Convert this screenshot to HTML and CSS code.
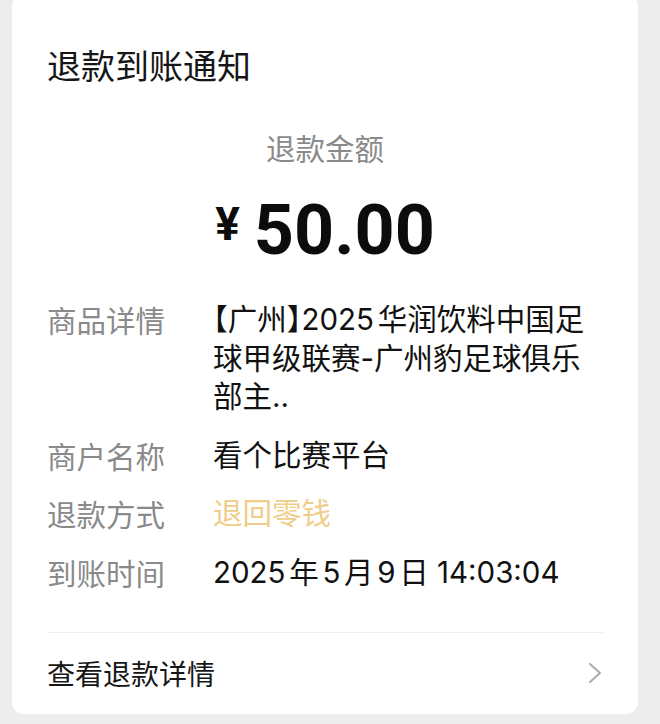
FILE: index.html
```html
<!DOCTYPE html>
<html lang="zh-CN">
<head>
<meta charset="utf-8">
<title>退款到账通知</title>
<link rel="stylesheet" href="styles.css">
</head>
<body>
<div class="card">
  <div class="title">退款到账通知</div>
  <div class="amount-label">退款金额</div>
  <div class="amount"><span class="yen">¥</span>50.00</div>
  <div class="rows">
    <div class="label">商品详情</div>
    <div class="value">【广州】2025华润饮料中国足球甲级联赛-广州豹足球俱乐<span class="tight">部主..</span></div>
    <div class="label">商户名称</div>
    <div class="value">看个比赛平台</div>
    <div class="label">退款方式</div>
    <div class="value gold">退回零钱</div>
    <div class="label">到账时间</div>
    <div class="value">2025年5月9日 14:03:04</div>
  </div>
  <div class="footer">
    <span class="footer-text">查看退款详情</span>
    <svg class="chev" width="14" height="22" viewBox="0 0 14 22"><polyline points="2,2 12,11 2,20" fill="none" stroke="#ababab" stroke-width="2" stroke-linecap="round" stroke-linejoin="round"/></svg>
  </div>
</div>
</body>
</html>
```

FILE: styles.css
```css
html, body {
  margin: 0;
  padding: 0;
  background: #ededed;
}
body {
  font-family: "Noto Sans CJK SC", "Noto Sans", sans-serif;
  color: #111;
  height: 724px;
  overflow: hidden;
}
.card {
  background: #fff;
  margin: -6px 22px 0 12px;
  border-radius: 12px;
  padding: 51px 35px 21px 35px;
}
.title {
  font-size: 34px;
  line-height: 40px;
  color: #161616;
}
.amount-label {
  margin-top: 42px;
  text-align: center;
  font-size: 29.5px;
  line-height: 40px;
  color: #8a8a8a;
}
.amount {
  margin-top: 17px;
  text-align: center;
  font-family: Roboto, "Liberation Sans", sans-serif;
  font-weight: 700;
  font-size: 70px;
  line-height: 80px;
  color: #0c0c0c;
}
.yen {
  font-size: 46px;
  vertical-align: 14px;
  margin-right: 14px;
}
.rows {
  margin-top: 30px;
  display: grid;
  grid-template-columns: 166px 1fr;
  row-gap: 20px;
  font-size: 29.5px;
  line-height: 38.5px;
}
.label {
  color: #8a8a8a;
}
.value {
  color: #111;
  font-family: Inter, "Noto Sans CJK SC", sans-serif;
  font-feature-settings: "halt";
  text-autospace: normal;
}
.tight {
  text-autospace: no-autospace;
}
.gold {
  color: #f0cd88;
}
.footer {
  margin-top: 41px;
  border-top: 1px solid #f0f0f0;
  padding-top: 20px;
  display: flex;
  align-items: center;
  justify-content: space-between;
}
.footer-text {
  font-size: 28px;
  line-height: 40px;
  color: #161616;
}
.chev {
  display: block;
  margin-right: 1px;
}
```
